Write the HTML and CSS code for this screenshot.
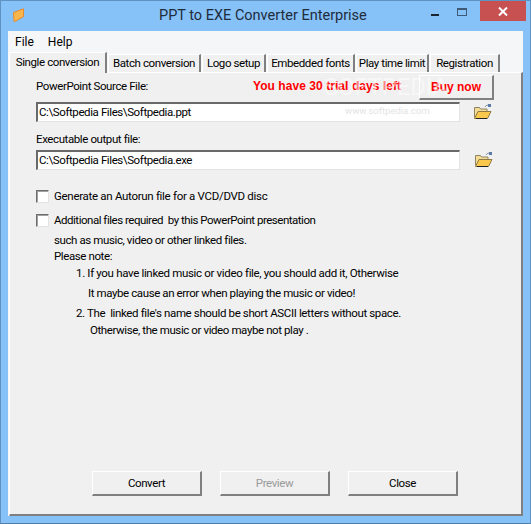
FILE: index.html
```html
<!DOCTYPE html>
<html lang="en">
<head>
<meta charset="utf-8">
<title>PPT to EXE Converter Enterprise</title>
<link rel="stylesheet" href="styles.css">
</head>
<body>
<div class="window">
  <header class="titlebar">
    <svg class="app-icon" width="12" height="14" viewBox="0 0 12 14"><path d="M.5 4.500 10.500.8v7.700L2.500 13.200H1z" fill="#f9b64c" stroke="#e98a2c"/></svg>
    <span class="title">PPT to EXE Converter Enterprise</span>
    <div class="controls">
      <span class="min"></span>
      <span class="max"></span>
      <span class="close"><svg width="10" height="9" viewBox="0 0 10 9"><path d="M1 .5 9 8.500M9 .5 1 8.500" stroke="#fff" stroke-width="2"/></svg></span>
    </div>
  </header>
  <div class="client">
    <nav class="menu"><span>File</span><span>Help</span></nav>
    <div class="tabs">
      <span class="tab tab-active tab-single">Single conversion</span>
      <span class="tab tab-batch">Batch conversion</span>
      <span class="tab tab-logo">Logo setup</span>
      <span class="tab tab-embed">Embedded fonts</span>
      <span class="tab tab-play">Play time limit</span>
      <span class="tab tab-reg">Registration</span>
    </div>
    <main class="panel">
      <div class="source-row">
        <span class="label">PowerPoint Source File:</span>
        <strong class="trial">You have 30 trial days left</strong>
        <span class="btn btn-buy">Buy now</span>
      </div>
      <div class="file-row file-row-source">
        <div class="field">C:\Softpedia Files\Softpedia.ppt</div>
        <svg class="folder" width="18" height="16" viewBox="0 0 18 16"><path d="M11 3c1-2 3-2.500 4-1" fill="none" stroke="#8a97a8"/><rect x="14" y="0" width="3" height="3" fill="#5b7aa8"/><path d="M.5 13.500V3.500h5l1 1.500h6.500v2" fill="#f3dc93" stroke="#8f8364"/><path d="M.5 14.500 4 7.500h13l-3.500 7z" fill="#fbc84e" stroke="#8f7a45"/><path d="M2 14.500h11" stroke="#222"/></svg>
      </div>
      <div class="label label-output">Executable output file:</div>
      <div class="file-row file-row-output">
        <div class="field">C:\Softpedia Files\Softpedia.exe</div>
        <svg class="folder folder-output" width="18" height="16" viewBox="0 0 18 16"><path d="M11 3c1-2 3-2.500 4-1" fill="none" stroke="#8a97a8"/><rect x="14" y="0" width="3" height="3" fill="#5b7aa8"/><path d="M.5 13.500V3.500h5l1 1.500h6.500v2" fill="#f3dc93" stroke="#8f8364"/><path d="M.5 14.500 4 7.500h13l-3.500 7z" fill="#fbc84e" stroke="#8f7a45"/><path d="M2 14.500h11" stroke="#222"/></svg>
      </div>
      <label class="check check-autorun"><span class="box"></span>Generate an Autorun file for a VCD/DVD disc</label>
      <label class="check check-extra"><span class="box"></span>Additional files required&nbsp; by this PowerPoint presentation</label>
      <div class="notes">
        <p class="n-such">such as music, video or other linked files.</p>
        <p class="n-please">Please note:</p>
        <p class="n-1">1. If you have linked music or video file, you should add it, Otherwise</p>
        <p class="n-1b">It maybe cause an error when playing the music or video!</p>
        <p class="n-2">2. The&nbsp; linked file's name should be short ASCII letters without space.</p>
        <p class="n-2b">Otherwise, the music or video maybe not play .</p>
      </div>
      <div class="actions">
        <span class="btn">Convert</span>
        <span class="btn btn-disabled">Preview</span>
        <span class="btn">Close</span>
      </div>
      <div class="mark-logo">SOFTPEDIA</div>
      <div class="mark-url">www.softpedia.com</div>
    </main>
  </div>
</div>
</body>
</html>
```

FILE: styles.css
```css
* { box-sizing: border-box; }
html, body { margin: 0; padding: 0; }
body {
  width: 531px;
  height: 524px;
  overflow: hidden;
  font-family: Roboto, "Liberation Sans", sans-serif;
  font-size: 11.5px;
  letter-spacing: -.4px;
  color: #000;
}
.window {
  width: 531px;
  height: 524px;
  background: #86c1f7;
  border: 1px solid #5f93c4;
  border-bottom-color: #4f7ea8;
  display: flex;
  flex-direction: column;
}
.titlebar {
  height: 30px;
  flex: none;
  display: flex;
  align-items: flex-start;
  position: relative;
}
.app-icon { margin: 7px 0 0 12px; }
.title {
  position: absolute;
  left: 158px;
  top: 5px;
  font-size: 14.5px;
  letter-spacing: 0;
  line-height: 20px;
  color: #1e2c3c;
  white-space: nowrap;
}
.controls {
  margin-left: auto;
  margin-right: 4px;
  display: flex;
  align-items: flex-start;
}
.min { width: 8px; height: 2px; background: #1a2530; margin: 13px 18px 0 0; }
.max { width: 10px; height: 8px; border: 1px solid #3d5a78; border-top-width: 2px; margin: 7px 13px 0 0; }
.close {
  width: 46px;
  height: 20px;
  background: #c75050;
  display: flex;
  align-items: center;
  justify-content: center;
}
.client {
  flex: none;
  width: 515px;
  height: 485px;
  margin-left: 7px;
  background: #f5f6f7;
  display: flex;
  flex-direction: column;
}
.menu {
  height: 20px;
  flex: none;
  display: flex;
  align-items: center;
  gap: 14px;
  padding: 1px 0 0 7px;
  font-size: 12px;
  letter-spacing: 0;
}
.tabs {
  height: 21px;
  flex: none;
  display: flex;
  align-items: flex-end;
  padding-left: 1px;
  position: relative;
  z-index: 1;
}
.tab {
  height: 18px;
  padding-bottom: 1px;
  background: #f0f0f0;
  border-top: 1px solid #fff;
  border-left: 1px solid #fff;
  border-right: 2px solid #808080;
  display: flex;
  align-items: center;
  justify-content: center;
  white-space: nowrap;
  margin-right: 1px;
}
.tab-active { height: 21px; margin-bottom: -1px; padding-bottom: 2px; }
.tab-single { width: 98px; }
.tab-batch { width: 93px; }
.tab-logo { width: 64px; }
.tab-embed { width: 88px; }
.tab-play { width: 73px; }
.tab-reg { width: 70px; }
.panel {
  flex: 1;
  margin: 0 0 0 1px;
  background: #f0f0f0;
  border-top: 1px solid #fff;
  border-left: 1px solid #fff;
  border-right: 2px solid #808080;
  border-bottom: 2px solid #808080;
  padding: 0 0 0 26px;
  display: flex;
  flex-direction: column;
  position: relative;
}
.source-row {
  height: 26px;
  display: flex;
  align-items: flex-start;
}
.label { padding-top: 6px; }
.trial {
  position: absolute;
  left: 243px;
  top: 6px;
  color: #f00;
  font-family: "Liberation Sans", sans-serif;
  font-size: 12px;
  letter-spacing: .06px;
  line-height: 14px;
  white-space: nowrap;
}
.btn {
  width: 110px;
  height: 25px;
  background: #f0f0f0;
  border-top: 1px solid #fff;
  border-left: 1px solid #fff;
  border-right: 2px solid #808080;
  border-bottom: 2px solid #808080;
  display: flex;
  align-items: center;
  justify-content: center;
}
.btn-buy {
  width: 75px;
  height: 25px;
  margin: 2px 27px 0 auto;
  color: #f00;
  font-family: "Liberation Sans", sans-serif;
  font-size: 12px;
  letter-spacing: 0;
  font-weight: 700;
}
.btn-disabled { color: #9a9a9a; }
.file-row { display: flex; align-items: center; }
.file-row-source { margin-top: 3px; }
.file-row-output { margin-top: 3px; }
.field {
  width: 424px;
  height: 20px;
  background: #fff;
  border-top: 2px solid #696969;
  border-left: 2px solid #696969;
  border-right: 1px solid #e3e3e3;
  border-bottom: 1px solid #e3e3e3;
  padding-left: 1px;
  line-height: 17px;
}
.folder { margin-left: 14px; }
.folder-output { margin-left: 15px; }
.label-output { margin-top: 5px; padding-top: 5px; height: 20px; line-height: 14px; }
.check { display: flex; align-items: center; height: 16px; }
.check-autorun { margin-top: 18px; letter-spacing: -.3px; }
.check-extra { margin-top: 8px; letter-spacing: -.48px; }
.box {
  width: 13px;
  height: 13px;
  margin-right: 5px;
  background: #fff;
  border-top: 1px solid #6d6d6d;
  border-left: 1px solid #6d6d6d;
  border-right: 1px solid #e3e3e3;
  border-bottom: 1px solid #e3e3e3;
  box-shadow: inset 1px 1px 0 #a0a0a0;
}
.notes { padding-left: 18px; }
.notes p { margin: 0; line-height: 14px; white-space: nowrap; }
.notes .n-such { margin-top: 5px; }
.notes .n-please { margin-top: 2px; }
.notes .n-1 { margin-top: 3px; padding-left: 22px; letter-spacing: -.33px; }
.notes .n-1b { margin-top: 6px; padding-left: 34px; }
.notes .n-2 { margin-top: 6px; padding-left: 22px; letter-spacing: -.37px; }
.notes .n-2b { margin-top: 3px; padding-left: 36px; }
.actions {
  margin-top: auto;
  margin-bottom: 18px;
  margin-left: 56px;
  display: flex;
  gap: 18px;
}
.mark-logo {
  position: absolute;
  left: 314px;
  top: 2px;
  font-size: 24px;
  font-weight: 400;
  line-height: 24px;
  letter-spacing: -.2px;
  color: rgba(255, 255, 255, .5);
  pointer-events: none;
}
.mark-url {
  position: absolute;
  left: 335px;
  top: 31px;
  font-size: 9.5px;
  letter-spacing: 0;
  line-height: 14px;
  color: #e4e4e4;
  pointer-events: none;
}
```
